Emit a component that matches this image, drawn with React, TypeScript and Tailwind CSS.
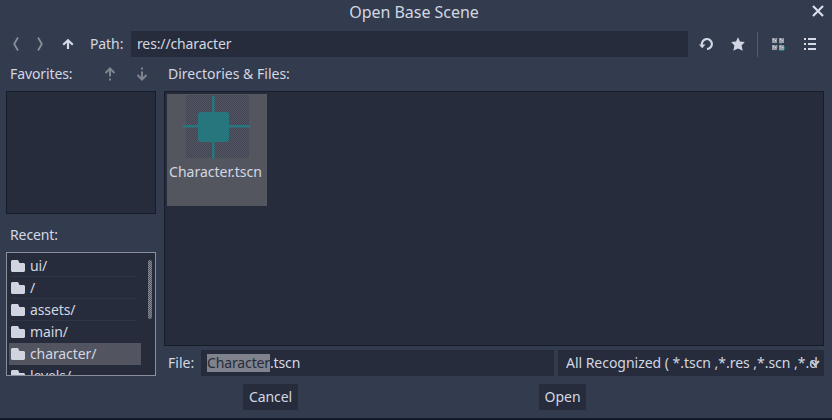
import React from "react";

type IconProps = { className?: string };

const Chevron = ({ flip }: { flip?: boolean }) => (
  <svg width="8" height="16" viewBox="0 0 8 16" fill="none" stroke="#8b8e98" strokeWidth="1.8" className={flip ? "-scale-x-100" : ""}>
    <path d="M6 1.5 L4.2 4.5 L2.2 8 L4.2 11.5 L6 14.5" />
  </svg>
);

const ArrowUp = () => (
  <svg width="12" height="12" viewBox="0 0 12 12" fill="none" stroke="#d6dae6" strokeWidth="2.2">
    <path d="M6 11 V2 M1.2 6.8 L6 2.2 L10.8 6.8" />
  </svg>
);

const DashedArrow = ({ className }: IconProps) => (
  <svg width="12" height="16" viewBox="0 0 12 16" fill="none" stroke="#80848f" strokeWidth="2" className={className}>
    <path d="M6 10.5 V2.5 M1.5 7 L6 2.5 L10.5 7 M6 12.5 V14.5" />
  </svg>
);

const Close = () => (
  <svg width="12" height="12" viewBox="0 0 12 12" stroke="#dadeea" strokeWidth="2.2">
    <path d="M1 1 L11 11 M11 1 L1 11" />
  </svg>
);

const Reload = () => (
  <svg width="16" height="16" viewBox="0 0 16 16" fill="none">
    <path d="M4 9 A5 5 0 1 1 9 13" stroke="#d2d6e2" strokeWidth="2.2" />
    <path d="M1 8.5 H7.4 L4.2 12.2 Z" fill="#d2d6e2" />
  </svg>
);

const Star = () => (
  <svg width="16" height="16" viewBox="0 0 16 16" fill="#d2d6e2">
    <path d="M8 1.3 L10 5.6 L14.8 6.1 L11.6 9.4 L12.7 14.7 L8 12.4 L3.3 14.7 L4.4 9.4 L1.2 6.1 L6 5.6 Z" />
  </svg>
);

const Thumbs = () => (
  <svg width="14" height="14" viewBox="0 0 14 14">
    {[[1, 1], [8, 1], [1, 8], [8, 8]].map(([x, y]) => (
      <g key={`${x}-${y}`}>
        <rect x={x} y={y} width="5" height="5" fill="#999da8" />
        <path d={`M${x + 1} ${y + 1}h1v1h-1z M${x + 3} ${y + 2}h1v1h-1z`} fill="#d5d9e5" />
        <path d={`M${x + 3} ${y}h1v1h-1z`} fill="#6b707e" />
      </g>
    ))}
    <path d="M6.5 1v1M8 6.5h3M6.5 8v3M8 13.5h5M13.5 9v4" stroke="#27747b" />
  </svg>
);

const ListIcon = () => (
  <svg width="14" height="14" viewBox="0 0 14 14" fill="#d6dae6">
    <path d="M1 1h2v2H1zM5 1h8v2H5zM1 6h2v2H1zM5 6h8v2H5zM1 11h2v2H1zM5 11h8v2H5z" />
  </svg>
);

const Folder = () => (
  <svg width="14" height="12" viewBox="0 0 14 12" fill="#d0d4e1" className="shrink-0">
    <path d="M1 0H7L8.5 3H13L14 4V11L13 12H1L0 11V1Z" />
  </svg>
);

const DropArrow = () => (
  <svg width="12" height="10" viewBox="0 0 12 10" fill="none" stroke="#c5c9d4" strokeWidth="2">
    <path d="M2 3 L6 7 L10 3" />
  </svg>
);

const recent = ["ui/", "/", "assets/", "main/", "character/", "levels/"];

export default function App() {
  return (
    <div className="flex h-[420px] w-[832px] flex-col overflow-hidden border-b-2 border-[#151a28] bg-[#333b4e] font-['Noto_Sans',sans-serif] text-[14px] leading-5 text-[#d3d7e2]">
      <header className="grid h-[31px] shrink-0 grid-cols-[1fr_auto_1fr] items-start pr-2 pl-1">
        <span />
        <h1 className="pt-px text-[16px] leading-[22px] tracking-[-0.03px]">Open Base Scene</h1>
        <button className="mt-[5px] justify-self-end"><Close /></button>
      </header>

      <div className="flex h-[26px] shrink-0 items-center">
        <div className="flex w-[90px] items-center pl-3">
          <Chevron />
          <span className="ml-4 flex"><Chevron flip /></span>
          <span className="ml-[18px] flex"><ArrowUp /></span>
        </div>
        <span className="w-[41px] tracking-[-0.1px]">Path:</span>
        <div className="flex h-[26px] w-[557px] items-center bg-[#262c3b] pl-1.5 tracking-[-0.13px]">res://character</div>
        <div className="flex items-center pl-[10px]">
          <Reload />
          <span className="ml-4"><Star /></span>
          <span className="ml-[11px] h-[25px] w-px bg-[#565b69]" />
          <span className="ml-[13px]"><Thumbs /></span>
          <span className="ml-[18px]"><ListIcon /></span>
        </div>
      </div>

      <div className="flex h-[319px] shrink-0 gap-2 pl-1.5">
        <aside className="flex w-[150px] flex-col">
          <div className="flex h-[34px] items-center pl-1">
            <span className="w-[94px] tracking-[-0.1px]">Favorites:</span>
            <DashedArrow />
            <DashedArrow className="ml-5 rotate-180" />
          </div>
          <div className="h-[123px] shrink-0 border border-[#171c29] bg-[#262c3b]" />
          <div className="flex h-[38px] shrink-0 items-center pt-1 pl-1 tracking-[-0.1px]">Recent:</div>
          <div className="flex h-[124px] shrink-0 overflow-hidden border border-[#8b8f9a] bg-[#262c3b] pt-0.5 pl-0.5">
            <ul className="w-[132px]">
              {recent.map((name) => (
                <li key={name} className={`flex h-[22px] items-center pl-0.5 ${name === "character/" ? "bg-[#52555f]" : ""}`}>
                  <span className={`flex h-[22px] w-[125px] items-center gap-[5px] tracking-[-0.1px] ${name === "main/" || name === "character/" ? "" : "border-b border-[#303546]"}`}>
                    <Folder />
                    <span>{name}</span>
                  </span>
                </li>
              ))}
            </ul>
            <div className="mt-[5px] ml-[7px] h-[59px] w-1 rounded-sm bg-[repeating-conic-gradient(#858892_0_25%,#555963_0_50%)] bg-[length:2px_2px]" />
          </div>
        </aside>

        <main className="flex w-[660px] flex-col">
          <div className="flex h-[34px] items-center pl-1">Directories &amp; Files:</div>
          <div className="h-[255px] shrink-0 border border-[#171c29] bg-[#262c3b] pt-0.5 pl-0.5">
            <div className="flex h-[112px] w-[100px] flex-col items-center bg-[#53565f] pt-px">
              <div className="h-[63px] w-[63px] bg-[repeating-conic-gradient(#3f4353_0_25%,#555862_0_50%)] bg-[length:2px_2px]">
                <svg width="63" height="63" viewBox="0 0 63 63" fill="#28767d" className="overflow-visible">
                  <path d="M26 1h2.5v16H42l1 2v11h21v2.5H43V45l-2 2H28.500v17H26V47H14l-2-2V32.500H-3V30H12V19l2-2h12z" />
                </svg>
              </div>
              <span className="pt-1 pr-[3px]">Character.tscn</span>
            </div>
          </div>
          <div className="mt-1 flex h-[26px] shrink-0 items-center">
            <span className="w-[37px] pl-1">File:</span>
            <div className="flex h-[26px] w-[353px] items-center bg-[#262c3b] pl-1.5 tracking-[-0.13px]">
              <span className="h-[18px] bg-[#80838d] leading-[18px] text-[#262c3b]">Character</span>
              <span>.tscn</span>
            </div>
            <div className="relative ml-1 flex h-[26px] w-[266px] items-center overflow-hidden bg-[#262c3b] pl-2">
              <span className="w-[252px] overflow-hidden whitespace-nowrap tracking-[-0.03px]">All Recognized ( *.tscn ,*.res ,*.scn ,*.d</span>
              <span className="absolute top-2 right-[3px]"><DropArrow /></span>
            </div>
          </div>
        </main>
      </div>

      <footer className="flex h-[42px] shrink-0 items-start gap-[241px] pt-2 pl-[243px]">
        <button className="h-[26px] w-[55px] bg-[#262c3b] tracking-[-0.1px]">Cancel</button>
        <button className="h-[26px] w-[47px] bg-[#262c3b]">Open</button>
      </footer>
    </div>
  );
}
